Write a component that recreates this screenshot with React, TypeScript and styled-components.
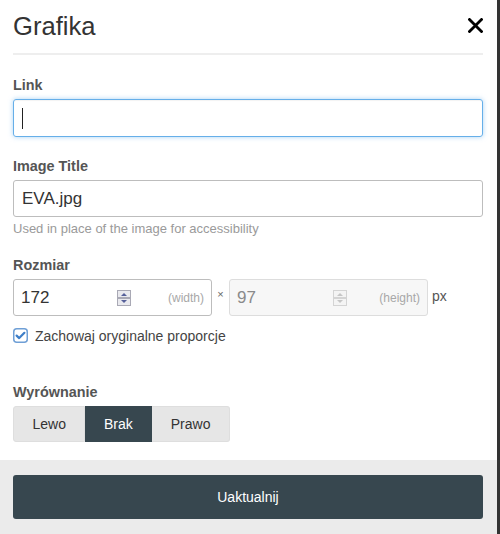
import { createGlobalStyle, styled } from "styled-components";

const GlobalStyle = createGlobalStyle`
  html, body {
    margin: 0;
    padding: 0;
    background: #333;
  }
  body {
    font-family: "Liberation Sans", Arial, sans-serif;
    color: #333;
  }
  * {
    box-sizing: border-box;
  }
`;

const SpinnerIcon = ({ disabled }: { disabled?: boolean }) => {
  const edge = disabled ? "#d4d4d4" : "#a9a9b5";
  const fill = disabled ? "#f4f4f4" : "#e9e9ee";
  const arrow = disabled ? "#c6c6c6" : "#56609a";
  return (
    <svg width="14" height="16" viewBox="0 0 14 16">
      <rect x="0.5" y="0.5" width="13" height="7" fill={fill} stroke={edge} />
      <rect x="0.5" y="8.5" width="13" height="7" fill={fill} stroke={edge} />
      <path d="M4 6 L7 3 L10 6 Z" fill={arrow} />
      <path d="M4 10 L7 13 L10 10 Z" fill={arrow} />
    </svg>
  );
};

const CheckIcon = () => (
  <svg width="15" height="15" viewBox="0 0 15 15">
    <rect x="0.75" y="0.75" width="13.5" height="13.5" rx="3" fill="#fff" stroke="#6f9fd6" strokeWidth="1.5" />
    <path d="M3.6 7.6 L6.2 10.1 L11.4 4.8" fill="none" stroke="#3d7ec8" strokeWidth="2.2" strokeLinecap="round" strokeLinejoin="round" />
  </svg>
);

const CloseIcon = () => (
  <svg width="15" height="15" viewBox="0 0 15 15">
    <path d="M1.5 1.5 L13.5 13.5 M13.5 1.5 L1.5 13.5" stroke="#000" strokeWidth="2.8" strokeLinecap="square" />
  </svg>
);

type SizeFieldProps = {
  value: string;
  unit: string;
  disabled?: boolean;
};

const SizeField = ({ value, unit, disabled }: SizeFieldProps) => (
  <NumberBox $disabled={disabled}>
    <NumberValue $disabled={disabled}>{value}</NumberValue>
    <SpinnerIcon disabled={disabled} />
    <NumberUnit>({unit})</NumberUnit>
  </NumberBox>
);

const App = () => {
  const alignments = ["Lewo", "Brak", "Prawo"];
  const active = "Brak";

  return (
    <>
      <GlobalStyle />
      <Dialog>
        <Header>
          <Title>Grafika</Title>
          <CloseButton aria-label="Zamknij">
            <CloseIcon />
          </CloseButton>
        </Header>

        <Body>
          <Field $gap={19}>
            <Label>Link</Label>
            <FocusedInput>
              <Caret />
            </FocusedInput>
          </Field>

          <Field $gap={18}>
            <Label>Image Title</Label>
            <TextInput readOnly defaultValue="EVA.jpg" />
            <HelpText>Used in place of the image for accessibility</HelpText>
          </Field>

          <Field $gap={39}>
            <Label>Rozmiar</Label>
            <SizeRow>
              <SizeField value="172" unit="width" />
              <Times>×</Times>
              <SizeField value="97" unit="height" disabled />
              <Px>px</Px>
            </SizeRow>
            <CheckRow>
              <CheckIcon />
              <CheckLabel>Zachowaj oryginalne proporcje</CheckLabel>
            </CheckRow>
          </Field>

          <Field $gap={0}>
            <Label>Wyrównanie</Label>
            <ButtonGroup>
              {alignments.map((a) => (
                <GroupButton key={a} $active={a === active}>
                  {a}
                </GroupButton>
              ))}
            </ButtonGroup>
          </Field>
        </Body>

        <Footer>
          <SubmitButton>Uaktualnij</SubmitButton>
        </Footer>
      </Dialog>
    </>
  );
};

export default App;

const Dialog = styled.div`
  width: 497px;
  height: 534px;
  background: #fff;
  display: flex;
  flex-direction: column;
`;

const Header = styled.div`
  height: 55px;
  margin: 0 14px 0 13px;
  border-bottom: 2px solid #eeeeee;
  display: flex;
  align-items: center;
  justify-content: space-between;
  padding-bottom: 2px;
`;

const Title = styled.h1`
  margin: 0;
  font-size: 25.6px;
  font-weight: normal;
  color: #333;
  line-height: 30px;
`;

const CloseButton = styled.button`
  border: none;
  background: none;
  padding: 0;
  display: flex;
  cursor: pointer;
`;

const Body = styled.div`
  padding: 20px 14px 0 13px;
`;

const Field = styled.div<{ $gap: number }>`
  display: flex;
  flex-direction: column;
  margin-bottom: ${(p) => p.$gap}px;
`;

const Label = styled.label`
  font-size: 14.4px;
  font-weight: bold;
  color: #555;
  line-height: 20px;
  margin-bottom: 4px;
`;

const FocusedInput = styled.div`
  height: 38px;
  border: 1px solid #66afe9;
  border-radius: 3px;
  box-shadow: inset 0 1px 1px rgba(0, 0, 0, 0.05), 0 0 5px rgba(102, 175, 233, 0.55);
  display: flex;
  align-items: center;
  padding-left: 8px;
`;

const Caret = styled.span`
  width: 1px;
  height: 21px;
  background: #222;
`;

const TextInput = styled.input`
  height: 37px;
  border: 1px solid #bdbdbd;
  border-radius: 3px;
  padding: 0 8px;
  font-family: inherit;
  font-size: 17px;
  color: #333;
  outline: none;
`;

const HelpText = styled.div`
  margin-top: 3px;
  font-size: 13px;
  line-height: 17px;
  color: #9a9a9a;
`;

const SizeRow = styled.div`
  display: flex;
  align-items: center;
`;

const NumberBox = styled.div<{ $disabled?: boolean }>`
  width: 199px;
  height: 37px;
  border: 1px solid ${(p) => (p.$disabled ? "#dddddd" : "#bdbdbd")};
  border-radius: 3px;
  background: ${(p) => (p.$disabled ? "#f7f7f7" : "#fff")};
  display: flex;
  align-items: center;
  padding: 0 7px;
`;

const NumberValue = styled.span<{ $disabled?: boolean }>`
  width: 96px;
  font-size: 17px;
  color: ${(p) => (p.$disabled ? "#8a8a8a" : "#333")};
`;

const NumberUnit = styled.span`
  margin-left: auto;
  font-size: 12px;
  color: #a8a8a8;
`;

const Times = styled.span`
  width: 17px;
  text-align: center;
  font-size: 11px;
  color: #666;
  align-self: flex-start;
  margin-top: 9px;
`;

const Px = styled.span`
  margin-left: 4px;
  font-size: 14px;
  color: #555;
  align-self: flex-start;
  margin-top: 9px;
`;

const CheckRow = styled.div`
  margin-top: 12px;
  display: flex;
  align-items: center;
  gap: 7px;
  height: 15px;
`;

const CheckLabel = styled.span`
  font-size: 14px;
  color: #444;
`;

const ButtonGroup = styled.div`
  display: flex;
`;

const GroupButton = styled.button<{ $active?: boolean }>`
  height: 36px;
  padding: 0 18.5px;
  border: 1px solid ${(p) => (p.$active ? "#37474f" : "#dedede")};
  background: ${(p) => (p.$active ? "#37474f" : "#e6e6e6")};
  color: ${(p) => (p.$active ? "#fff" : "#333")};
  font-family: inherit;
  font-size: 14px;
  cursor: pointer;

  &:first-child {
    border-radius: 3px 0 0 3px;
  }
  &:last-child {
    border-radius: 0 3px 3px 0;
  }
  & + & {
    border-left: none;
  }
`;

const Footer = styled.div`
  margin-top: auto;
  background: #ebebeb;
  padding: 15px 14px 15px 13px;
`;

const SubmitButton = styled.button`
  width: 100%;
  height: 44px;
  border: none;
  border-radius: 3px;
  background: #37474f;
  color: #fff;
  font-family: inherit;
  font-size: 14px;
  cursor: pointer;
`;
